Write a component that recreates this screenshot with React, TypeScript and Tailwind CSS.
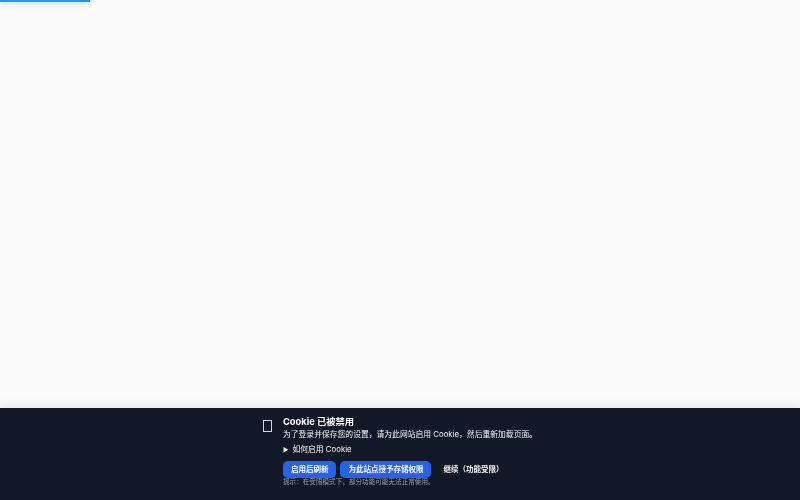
import { useState } from 'react';

export default function App() {
  const [open, setOpen] = useState(false);

  return (
    <div
      className="min-h-screen bg-[#fafafa]"
      style={{ fontFamily: 'Inter, "Noto Sans CJK SC", sans-serif' }}
    >
      {/* top loading bar */}
      <div className="fixed top-0 left-0 h-[2px] w-[90px] bg-[#2196f3] shadow-[0_0_6px_rgba(33,150,243,0.7)]" />

      {/* cookie banner */}
      <div className="fixed bottom-0 left-0 right-0 h-[92px] bg-[#111827] text-white shadow-[0_-3px_10px_rgba(0,0,0,0.08)]">
        <div className="flex justify-center pt-[7px]">
          <div className="flex items-start gap-[11px]">
            <div className="mt-[5px] h-[12px] w-[9px] border border-gray-300" />
            <div className="flex flex-col">
              <div className="text-[9.3px] font-bold leading-[13px]">Cookie 已被禁用</div>
              <div className="mt-[1px] text-[7.8px] leading-[11px] text-gray-100">
                为了登录并保存您的设置，请为此网站启用 Cookie，然后重新加载页面。
              </div>
              <button
                className="mt-[4px] flex items-center gap-[4px] text-left text-[7.8px] leading-[11px] text-gray-100"
                onClick={() => setOpen(!open)}
              >
                <span className="text-[6px]">▶</span>
                如何启用 Cookie
              </button>
              <div className="mt-[6px] flex items-center gap-[4px]">
                <button className="h-[17px] rounded-[5px] bg-[#2563eb] px-[8px] text-[7.5px] font-bold leading-[17px] text-white">
                  启用后刷新
                </button>
                <button className="h-[17px] rounded-[5px] bg-[#2563eb] px-[8px] text-[7.5px] font-bold leading-[17px] text-white">
                  为此站点授予存储权限
                </button>
                <button className="h-[17px] px-[8px] text-[7.5px] font-bold leading-[17px] text-gray-100">
                  继续（功能受限）
                </button>
              </div>
              <div className="text-[6.6px] leading-[8px] text-gray-400">
                提示：在受限模式下，部分功能可能无法正常使用。
              </div>
            </div>
          </div>
        </div>
      </div>
    </div>
  );
}
